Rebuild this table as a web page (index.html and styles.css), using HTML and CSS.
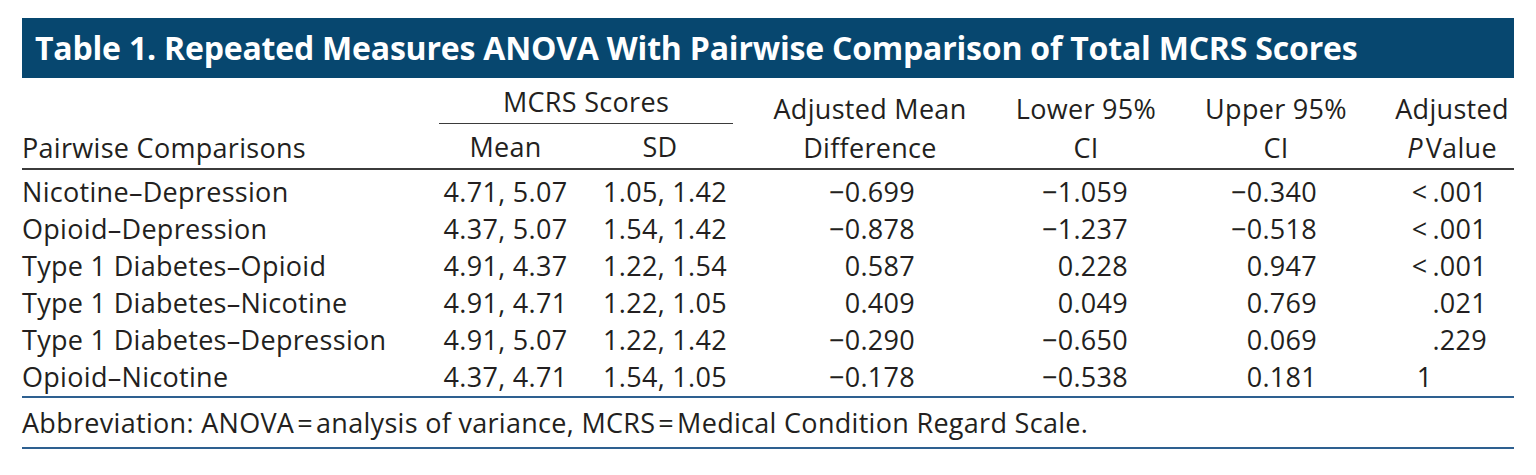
FILE: index.html
```html
<!DOCTYPE html>
<html lang="en">
<head>
<meta charset="utf-8">
<title>Table 1</title>
<link rel="stylesheet" href="styles.css">
</head>
<body>
<div class="figure">
  <div class="title">Table 1. Repeated Measures ANOVA With Pairwise Comparison of Total MCRS Scores</div>
  <table class="data">
    <colgroup>
      <col class="c-label"><col class="c-mean"><col class="c-sd"><col class="c-adj"><col class="c-low"><col class="c-up"><col class="c-p">
    </colgroup>
    <thead>
      <tr class="h1">
        <th rowspan="2" class="label">Pairwise Comparisons</th>
        <th colspan="2" class="group"><div class="group-in">MCRS Scores</div></th>
        <th rowspan="2" class="two">Adjusted Mean<br>Difference</th>
        <th rowspan="2" class="two">Lower 95%<br>CI</th>
        <th rowspan="2" class="two">Upper 95%<br>CI</th>
        <th rowspan="2" class="two pcol">Adjusted<br><i>P</i>&#8202;Value</th>
      </tr>
      <tr class="h2">
        <th class="sub mean">Mean</th>
        <th class="sub sd">SD</th>
      </tr>
    </thead>
    <tbody>
      <tr><td class="label">Nicotine–Depression</td><td class="mean">4.71, 5.07</td><td class="sd">1.05, 1.42</td><td class="adj">−0.699</td><td class="low">−1.059</td><td class="up">−0.340</td><td class="p">&lt;&#8201;.001</td></tr>
      <tr><td class="label">Opioid–Depression</td><td class="mean">4.37, 5.07</td><td class="sd">1.54, 1.42</td><td class="adj">−0.878</td><td class="low">−1.237</td><td class="up">−0.518</td><td class="p">&lt;&#8201;.001</td></tr>
      <tr><td class="label">Type 1 Diabetes–Opioid</td><td class="mean">4.91, 4.37</td><td class="sd">1.22, 1.54</td><td class="adj">0.587</td><td class="low">0.228</td><td class="up">0.947</td><td class="p">&lt;&#8201;.001</td></tr>
      <tr><td class="label">Type 1 Diabetes–Nicotine</td><td class="mean">4.91, 4.71</td><td class="sd">1.22, 1.05</td><td class="adj">0.409</td><td class="low">0.049</td><td class="up">0.769</td><td class="p">.021</td></tr>
      <tr><td class="label">Type 1 Diabetes–Depression</td><td class="mean">4.91, 5.07</td><td class="sd">1.22, 1.42</td><td class="adj">−0.290</td><td class="low">−0.650</td><td class="up">0.069</td><td class="p">.229</td></tr>
      <tr><td class="label">Opioid–Nicotine</td><td class="mean">4.37, 4.71</td><td class="sd">1.54, 1.05</td><td class="adj">−0.178</td><td class="low">−0.538</td><td class="up">0.181</td><td class="p">1<span class="ghost">.001</span></td></tr>
    </tbody>
  </table>
  <div class="note">Abbreviation: ANOVA&#8202;=&#8202;analysis of variance, MCRS&#8202;=&#8202;Medical Condition Regard Scale.</div>
</div>
</body>
</html>
```

FILE: styles.css
```css
html, body {
  margin: 0;
  padding: 0;
  background: #ffffff;
}

body {
  font-family: "Open Sans", "Liberation Sans", sans-serif;
  color: #231f20;
}

.figure {
  width: 1492px;
  margin: 18px 0 0 22px;
}

.title {
  height: 60px;
  background: #07476f;
  color: #ffffff;
  font-weight: 700;
  font-size: 32px;
  line-height: 60px;
  padding-left: 13px;
  white-space: nowrap;
  letter-spacing: -0.2px;
}

.data {
  width: 1492px;
  border-collapse: collapse;
  table-layout: fixed;
  font-size: 27px;
  letter-spacing: 0.3px;
}

.c-label { width: 417px; }
.c-mean { width: 133px; }
.c-sd { width: 176px; }
.c-adj { width: 244px; }
.c-low { width: 188px; }
.c-up { width: 192px; }
.c-p { width: 142px; }

.data th {
  font-weight: 400;
  padding: 0;
  vertical-align: bottom;
  line-height: 39px;
  white-space: nowrap;
}

.data thead tr.h1 th.two,
.data thead tr.h1 th.label {
  border-bottom: 2px solid #3b3b3b;
  padding-bottom: 1px;
}

.data th.label {
  text-align: left;
}

.data th.two {
  text-align: center;
}

.data th.pcol {
  padding-left: 18px;
}

.data th.group {
  height: 46px;
  text-align: left;
}

.group-in {
  width: 294px;
  text-align: center;
  border-bottom: 1.5px solid #3b3b3b;
  line-height: 40px;
  padding-bottom: 1px;
}

.h2 th.sub {
  border-bottom: 2px solid #3b3b3b;
  padding-top: 3px;
  padding-bottom: 1px;
  line-height: 40px;
}

.h2 th.mean { text-align: center; }
.h2 th.sd { text-align: center; padding-left: 0; }

.data td {
  padding: 0;
  line-height: 37px;
  white-space: nowrap;
}

.data tbody tr:first-child td { padding-top: 3px; }

.data td.label { text-align: left; }
.data td.mean { text-align: center; }
.data td.sd { text-align: center; padding-left: 10px; }
.data td.adj { text-align: right; padding-right: 77px; }
.data td.low { text-align: right; padding-right: 52px; }
.data td.up { text-align: right; padding-right: 55px; }
.data td.p { text-align: right; padding-right: 27px; }

.data tbody tr:last-child td {
  border-bottom: 2px solid #2e6090;
  padding-bottom: 1px;
}

.ghost { visibility: hidden; }

.note {
  font-size: 27px;
  letter-spacing: 0.3px;
  line-height: 49px;
  border-bottom: 2px solid #2e6090;
  white-space: nowrap;
}
```
